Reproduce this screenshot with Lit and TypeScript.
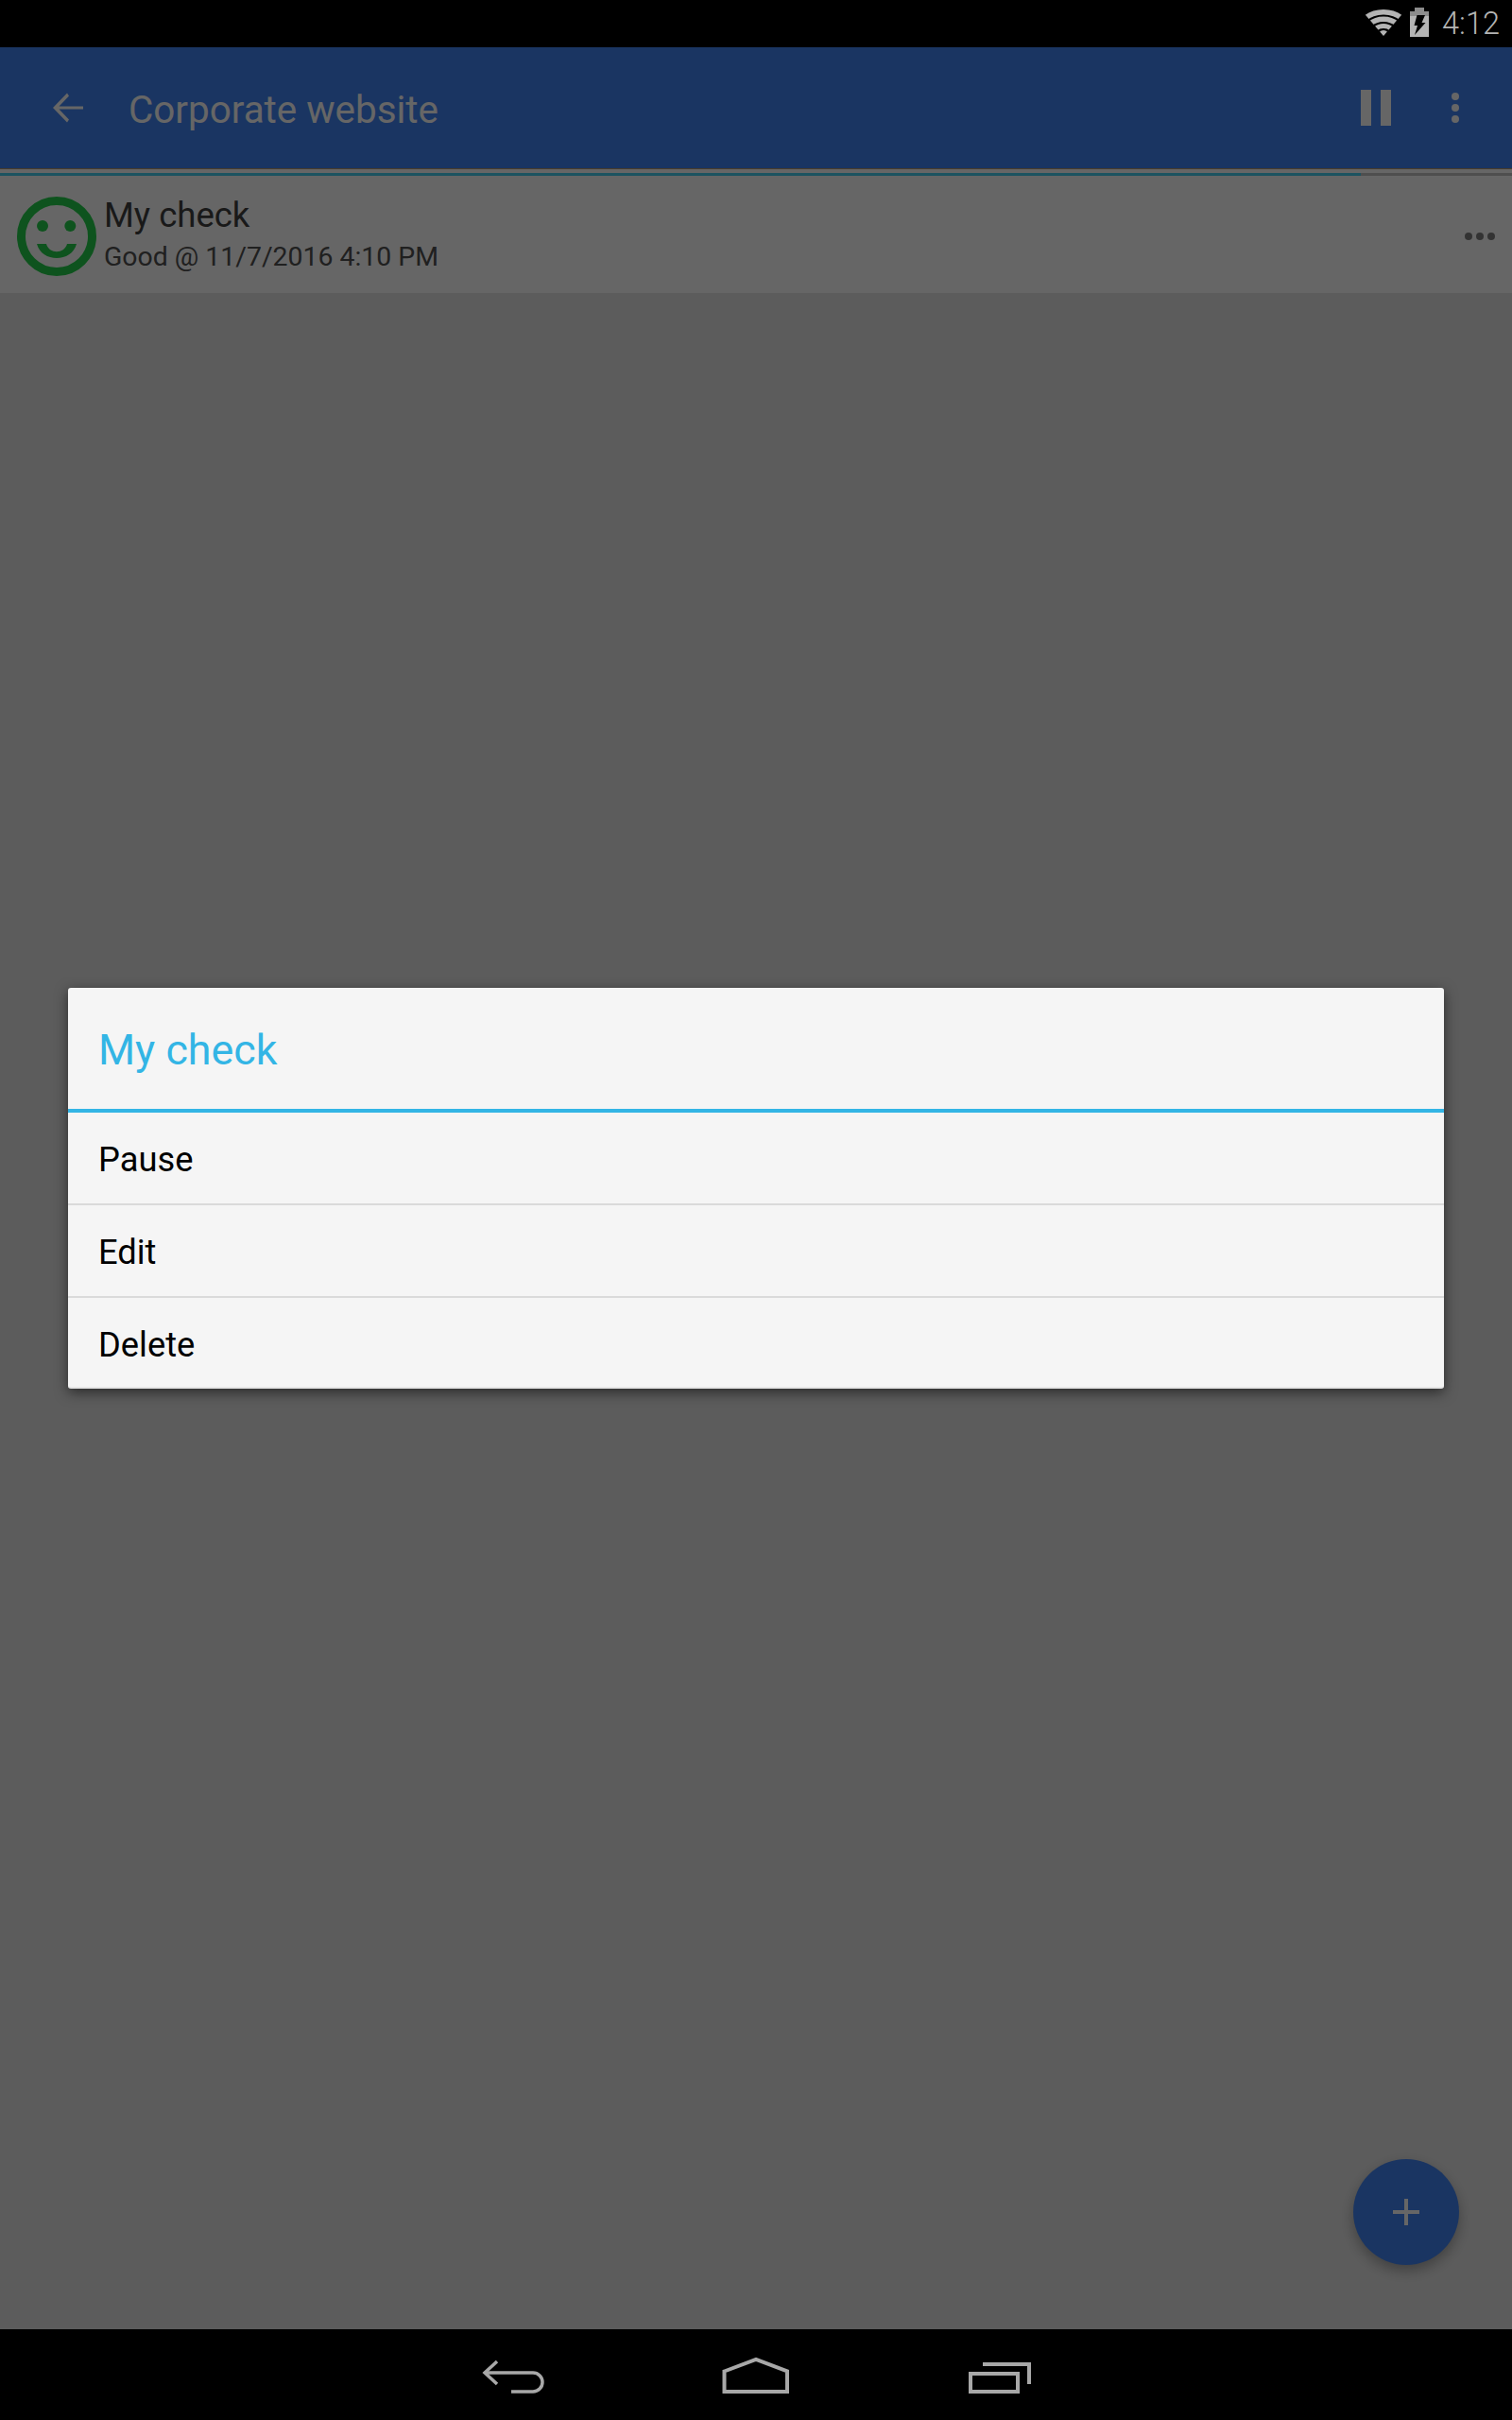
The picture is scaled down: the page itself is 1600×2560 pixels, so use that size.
import { LitElement, css, html } from "lit";
import { customElement } from "lit/decorators.js";

@customElement("app-root")
export class AppRoot extends LitElement {
  static styles = css`
    * {
      margin: 0;
      padding: 0;
      box-sizing: border-box;
    }

    :host {
      display: block;
      width: 1600px;
      height: 2560px;
      font-family: Roboto, "Liberation Sans", sans-serif;
    }

    .screen {
      display: flex;
      flex-direction: column;
      height: 2560px;
    }

    .status {
      height: 50px;
      background: #000;
      display: flex;
      align-items: center;
      justify-content: flex-end;
      padding-right: 13px;
      color: #b4b4b4;
    }

    .status .wifi {
      margin-right: 8px;
      margin-bottom: 2px;
    }

    .status .battery {
      margin-right: 14px;
      margin-bottom: 3px;
    }

    .status .time {
      font-size: 32.5px;
      font-weight: 300;
      line-height: 50px;
    }

    .body {
      position: relative;
      flex: 1;
      display: flex;
      flex-direction: column;
      background: #e6e6e6;
    }

    .toolbar {
      height: 128px;
      background: #4285f4;
      display: flex;
      align-items: center;
      color: #fff;
    }

    .toolbar .back {
      margin-left: 56px;
      margin-right: 48px;
    }

    .toolbar .title {
      flex: 1;
      font-size: 40.4px;
      padding-top: 5px;
    }

    .toolbar .pause {
      margin-right: 64px;
    }

    .toolbar .more {
      margin-right: 56px;
    }

    .progress {
      height: 8px;
      display: flex;
      flex-direction: column;
      justify-content: flex-end;
      background: #fff;
      border-top: 1px solid #b89a6a;
    }

    .progress .track {
      height: 3px;
      background: #c2c2c2;
    }

    .progress .fill {
      width: 1440px;
      height: 3px;
      background: #46d0f0;
    }

    .check {
      height: 124px;
      background: #fff;
      display: flex;
      align-items: center;
      padding-left: 18px;
      padding-right: 18px;
    }

    .check .face,
    .check .dots {
      margin-top: 4px;
    }

    .check .info {
      flex: 1;
      margin-left: 8px;
    }

    .check .name {
      font-size: 36.5px;
      line-height: 42px;
      color: #404040;
    }

    .check .when {
      font-size: 28.4px;
      line-height: 36px;
      margin-top: 5px;
      color: #505050;
    }

    .scrim {
      position: absolute;
      inset: 0;
      background: rgba(0, 0, 0, 0.6);
    }

    .fab {
      position: absolute;
      left: 1432px;
      top: 2234px;
      width: 112px;
      height: 112px;
      border-radius: 50%;
      background: #4285f4;
      display: flex;
      align-items: center;
      justify-content: center;
      box-shadow: 0 6px 14px rgba(0, 0, 0, 0.3);
    }

    .dialog-wrap {
      position: absolute;
      left: 72px;
      right: 72px;
      top: 995px;
    }

    .dialog {
      height: 424px;
      background: #f5f5f5;
      border-radius: 3px;
      border-bottom: 2px solid #e6e6e6;
      box-shadow: 0 4px 14px rgba(0, 0, 0, 0.55);
    }

    .dialog h2 {
      height: 128px;
      padding-left: 32px;
      font-size: 44.8px;
      font-weight: 400;
      line-height: 132px;
      color: #33b5e5;
    }

    .dialog .rule {
      height: 4px;
      background: #33b5e5;
    }

    .dialog .item {
      height: 96px;
      padding-left: 32px;
      font-size: 36.3px;
      line-height: 100px;
      color: #000;
    }

    .dialog .sep {
      height: 2px;
      background: #dadada;
    }

    .nav {
      height: 96px;
      background: #000;
      display: flex;
      justify-content: center;
    }

    svg {
      display: block;
    }
  `;

  render() {
    return html`
      <div class="screen">
        <div class="status">
          <svg class="wifi" width="40" height="28" viewBox="0 0 40 28">
            <defs>
              <clipPath id="wedge">
                <polygon points="20,28 -10,-7 50,-7" />
              </clipPath>
            </defs>
            <g clip-path="url(#wedge)" fill="none" stroke="#b4b4b4">
              <ellipse cx="20" cy="28" rx="29" ry="25.25" stroke-width="5.5" />
              <ellipse cx="20" cy="28" rx="20.5" ry="17.75" stroke-width="5.5" />
              <ellipse cx="20" cy="28" rx="12" ry="10.5" stroke-width="5" />
              <circle cx="20" cy="28" r="6" fill="#b4b4b4" stroke="none" />
            </g>
          </svg>
          <svg class="battery" width="20" height="31" viewBox="0 0 20 31">
            <path fill="#8c8c8c" d="M5 0H15V4H20V10H0V4H5Z" />
            <rect x="0" y="9" width="20" height="22" fill="#b4b4b4" />
            <path fill="#000" d="M7.500 8H16L12.500 16H16.500L5 29 8 19H4.500Z" />
          </svg>
          <span class="time">4:12</span>
        </div>

        <div class="body">
          <div class="toolbar">
            <svg class="back" width="32" height="32" viewBox="0 0 32 32">
              <path fill="#fff" d="M32 14.500H6.500L17 3.500 15 0.500 0 16 15 31.500 17 28.500 6.500 17.500H32Z" />
            </svg>
            <div class="title">Corporate website</div>
            <svg class="pause" width="32" height="38" viewBox="0 0 32 38">
              <rect x="0" y="0" width="11" height="38" fill="#fff" />
              <rect x="21" y="0" width="11" height="38" fill="#fff" />
            </svg>
            <svg class="more" width="8" height="32" viewBox="0 0 8 32">
              <circle cx="4" cy="4" r="4" fill="#fff" />
              <circle cx="4" cy="16" r="4" fill="#fff" />
              <circle cx="4" cy="28" r="4" fill="#fff" />
            </svg>
          </div>

          <div class="progress">
            <div class="track">
              <div class="fill"></div>
            </div>
          </div>

          <div class="check">
            <svg class="face" width="84" height="84" viewBox="0 0 84 84">
              <circle cx="42" cy="42" r="37.500" fill="none" stroke="#25d04c" stroke-width="9" />
              <circle cx="27" cy="31" r="6" fill="#25d04c" />
              <circle cx="56.300" cy="31" r="6" fill="#25d04c" />
              <path fill="#25d04c" d="M21 50H31C34 61 50 61 53 50H63C58 70 26 70 21 50Z" />
            </svg>
            <div class="info">
              <div class="name">My check</div>
              <div class="when">Good @ 11/7/2016 4:10 PM</div>
            </div>
            <svg class="dots" width="32" height="8" viewBox="0 0 32 8">
              <circle cx="4" cy="4" r="4" fill="#808080" />
              <circle cx="16" cy="4" r="4" fill="#808080" />
              <circle cx="28" cy="4" r="4" fill="#808080" />
            </svg>
          </div>

          <div class="fab">
            <svg width="28" height="28" viewBox="0 0 28 28">
              <path fill="#fff" d="M12 0H16V12H28V16H16V28H12V16H0V12H12Z" />
            </svg>
          </div>

          <div class="scrim"></div>

          <div class="dialog-wrap">
            <div class="dialog">
              <h2>My check</h2>
              <div class="rule"></div>
              <div class="item">Pause</div>
              <div class="sep"></div>
              <div class="item">Edit</div>
              <div class="sep"></div>
              <div class="item">Delete</div>
            </div>
          </div>
        </div>

        <div class="nav">
          <svg width="640" height="96" viewBox="0 0 640 96">
            <g fill="none" stroke="#a8a8a8" stroke-width="4">
              <path stroke-width="3.500" d="M46 34L33 46 46 58" />
              <path stroke-width="3.500" d="M33 46H84A10 10 0 0 1 84 66H61" />
              <path d="M286.500 44.500L320 32 353 44.500V66H286.500Z" />
              <path d="M547 47H597V66H547Z" />
              <path d="M560 37H609V58" />
            </g>
          </svg>
        </div>
      </div>
    `;
  }
}
